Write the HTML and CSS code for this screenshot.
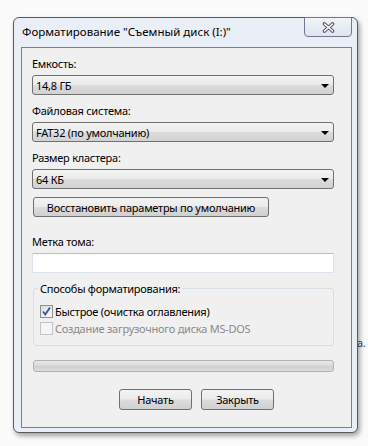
FILE: index.html
```html
<!DOCTYPE html>
<html lang="ru">
<head>
  <meta charset="UTF-8">
  <title>Форматирование</title>
  <link rel="stylesheet" href="styles.css">
</head>
<body>
  <div class="desktop">
    <span class="behind">а.</span>

    <div class="window">
      <div class="titlebar">
        <span class="title">Форматирование "Съемный диск (I:)"</span>
        <button class="close">
          <svg width="13" height="11" viewBox="0 0 13 11">
            <path d="M2.5 2 L10.5 9 M10.5 2 L2.5 9" stroke="#4e5566" stroke-width="3.6" stroke-linecap="round"/>
            <path d="M2.5 2 L10.5 9 M10.5 2 L2.5 9" stroke="#ffffff" stroke-width="1.6" stroke-linecap="round"/>
          </svg>
        </button>
      </div>

      <div class="panel">
        <div class="field">
          <label>Емкость:</label>
          <div class="combo"><span>14,8 ГБ</span><i class="arrow"></i></div>
        </div>
        <div class="field">
          <label>Файловая система:</label>
          <div class="combo"><span>FAT32 (по умолчанию)</span><i class="arrow"></i></div>
        </div>
        <div class="field">
          <label>Размер кластера:</label>
          <div class="combo"><span>64 КБ</span><i class="arrow"></i></div>
        </div>

        <button class="btn restore">Восстановить параметры по умолчанию</button>

        <div class="field">
          <label>Метка тома:</label>
          <div class="textbox"></div>
        </div>

        <fieldset class="group">
          <legend>Способы форматирования:</legend>
          <div class="check">
            <span class="box">
              <svg width="11" height="11" viewBox="0 0 11 11">
                <path d="M2 5.5 L4.3 8.5 L9 1.5" fill="none" stroke="#3a5199" stroke-width="1.8"/>
              </svg>
            </span>
            Быстрое (очистка оглавления)
          </div>
          <div class="check disabled">
            <span class="box"></span>
            Создание загрузочного диска MS-DOS
          </div>
        </fieldset>

        <div class="progress"></div>

        <div class="actions">
          <button class="btn">Начать</button>
          <button class="btn">Закрыть</button>
        </div>
      </div>
    </div>
  </div>
</body>
</html>
```

FILE: styles.css
```css
body {
  margin: 0;
  background: #fbfbfc;
  font-family: "Noto Sans", "Liberation Sans", sans-serif;
  font-size: 11px;
  letter-spacing: -0.25px;
  color: #000;
  overflow: hidden;
}

.desktop {
  position: relative;
  height: 446px;
  padding: 17px 0 0 13px;
  box-sizing: border-box;
}

.behind {
  position: absolute;
  left: 357px;
  top: 335px;
  color: #444;
}

.window {
  position: relative;
  z-index: 1;
  width: 345px;
  height: 416px;
  box-sizing: border-box;
  border: 1px solid #5a5a5a;
  border-radius: 6px;
  background: #e9eef7;
  box-shadow: 2px 3px 5px rgba(0, 0, 0, 0.35);
  display: flex;
  flex-direction: column;
  padding: 0 5px 4px 7px;
}

.titlebar {
  height: 29px;
  display: flex;
  justify-content: space-between;
  align-items: flex-start;
}

.title {
  margin-left: 1px;
  padding-top: 6px;
  line-height: 15px;
  font-size: 11.5px;
  letter-spacing: 0;
}

.close {
  width: 48px;
  height: 20px;
  margin-top: -1px;
  padding: 0;
  border: 1px solid #6f7b8c;
  border-radius: 0 0 4px 4px;
  background: linear-gradient(#f1f4f9, #dfe5ee);
  display: flex;
  align-items: center;
  justify-content: center;
}

.panel {
  flex: 1;
  border: 1px solid #7f7f7f;
  background: #f0f0f0;
  padding: 8px 17px 0 10px;
}

.field label {
  display: block;
  line-height: 15px;
  margin-bottom: 4px;
}

.combo {
  height: 20px;
  box-sizing: border-box;
  border: 1px solid #707070;
  border-radius: 3px;
  background: linear-gradient(#f3f3f3 0%, #ebebeb 48%, #dcdcdc 52%, #d2d2d2 100%);
  display: flex;
  align-items: center;
  justify-content: space-between;
  padding: 0 4px 0 3px;
  margin-bottom: 8px;
}

.arrow {
  width: 0;
  height: 0;
  border-left: 4px solid transparent;
  border-right: 4px solid transparent;
  border-top: 4px solid #000;
  margin-top: 1px;
}

.btn {
  height: 21px;
  padding: 0;
  border: 1px solid #707070;
  border-radius: 3px;
  background: linear-gradient(#f3f3f3 0%, #ebebeb 48%, #dcdcdc 52%, #d0d0d0 100%);
  font-family: inherit;
  font-size: 11px;
  letter-spacing: inherit;
  color: #000;
}

.restore {
  display: block;
  width: 236px;
  height: 20px;
  margin: 5px 0 17px 1px;
}

.textbox {
  height: 20px;
  box-sizing: border-box;
  border: 1px solid #dde3ea;
  border-top-color: #b9bec6;
  background: #fff;
  margin-bottom: 8px;
}

.group {
  margin: 2px 0 0 1px;
  padding: 7px 6px 8px 6px;
  border: 1px solid #d5dfe5;
  border-radius: 3px;
}

.group legend {
  margin-left: -2px;
  padding: 0 2px;
  line-height: 15px;
}

.check {
  display: flex;
  align-items: center;
  height: 17px;
}

.box {
  width: 13px;
  height: 13px;
  box-sizing: border-box;
  border: 1px solid #8e8f8f;
  background: linear-gradient(135deg, #dcdcdc, #fbfbfb);
  margin-right: 2px;
  display: flex;
  align-items: center;
  justify-content: center;
}

.check.disabled {
  color: #8a8a8a;
}

.check.disabled .box {
  border-color: #c4c4c4;
  background: #f5f5f5;
}

.progress {
  height: 12px;
  box-sizing: border-box;
  margin: 14px 0 0 1px;
  border: 1px solid #b2b2b2;
  border-radius: 3px;
  background: linear-gradient(#e8e8e8, #dadada 50%, #cfcfcf 51%, #dcdcdc);
}

.actions {
  display: flex;
  justify-content: flex-end;
  gap: 9px;
  margin: 17px 60px 0 0;
}

.actions .btn {
  width: 73px;
}
```
